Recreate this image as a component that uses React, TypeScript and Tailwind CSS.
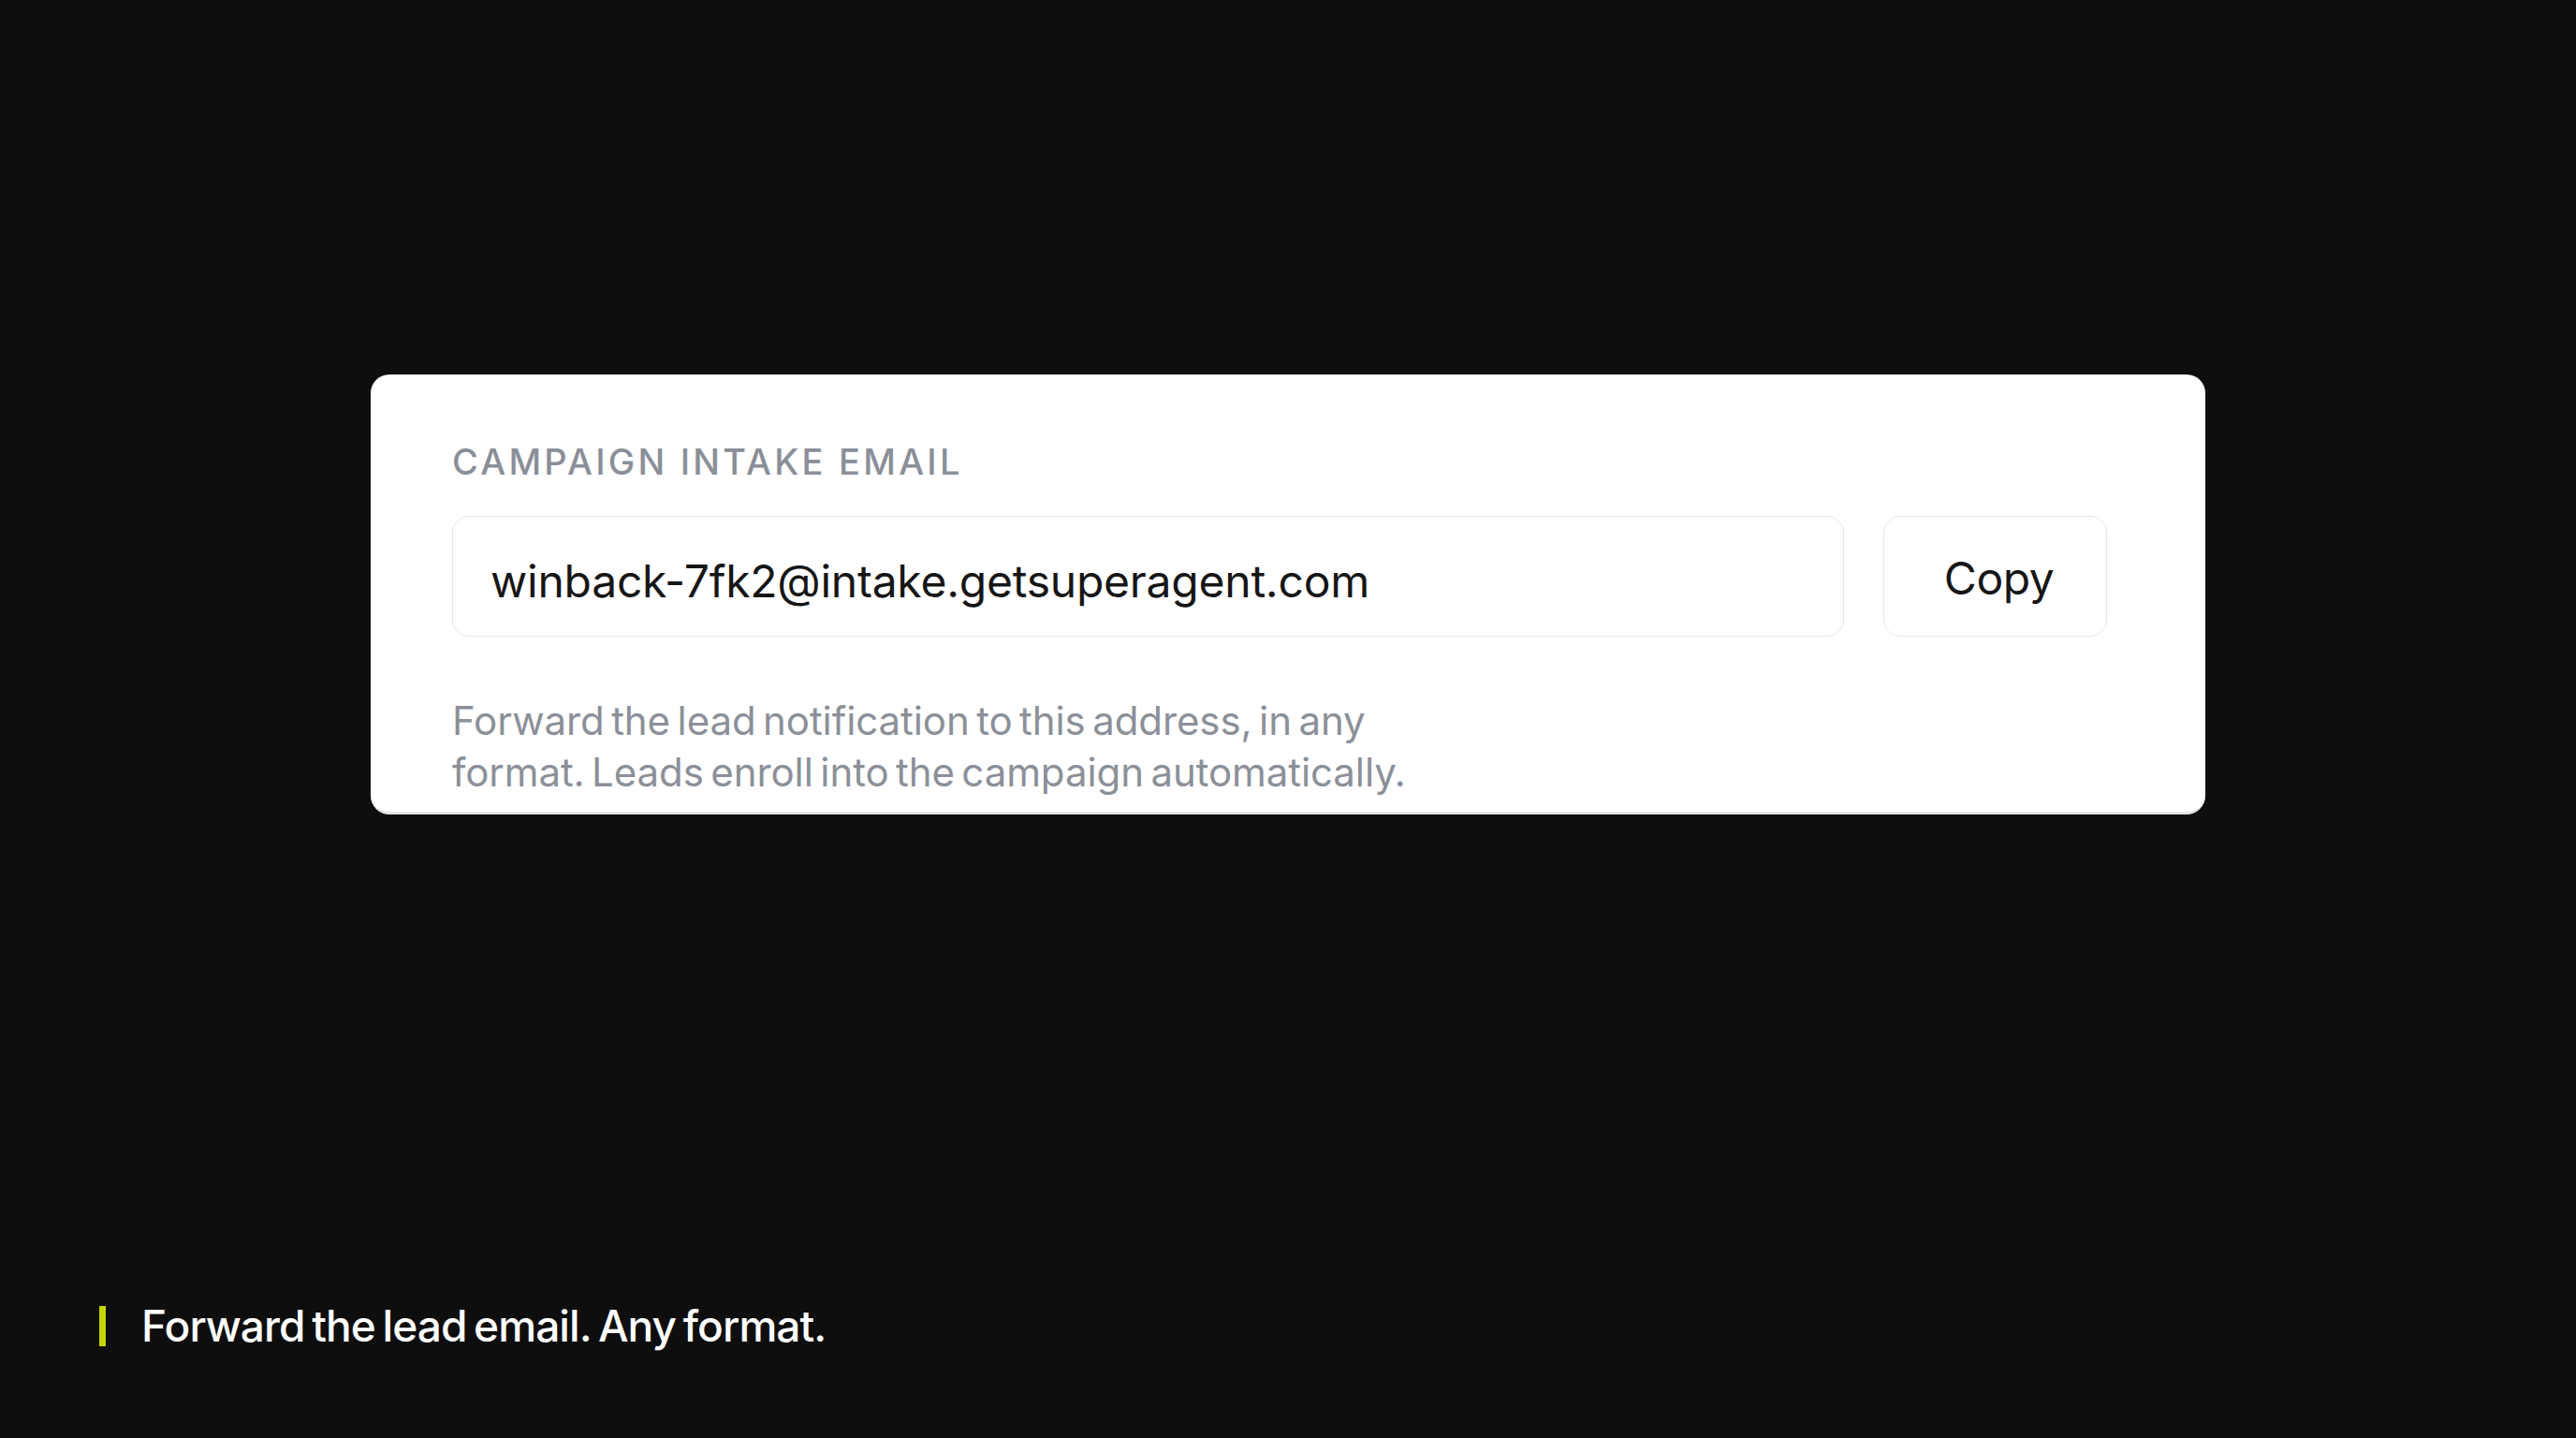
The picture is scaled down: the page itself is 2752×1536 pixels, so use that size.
import React from 'react';

const font = "font-['Inter','Noto_Sans',sans-serif]";

const IntakeCard: React.FC = () => {
  return (
    <div className="w-[1960px] h-[470px] bg-white rounded-[20px] border-b-[3px] border-[#e4e5ea] pl-[87px] pr-[105px] pt-[74px] overflow-hidden">
      <div className="text-[38px] leading-none font-medium tracking-[0.085em] text-[#8a8f98]">
        CAMPAIGN INTAKE EMAIL
      </div>

      <div className="flex gap-[42px] mt-[39px]">
        <div className="flex-1 h-[129px] border-[1.5px] border-[#e5e6eb] rounded-[18px] pl-[40px] pt-[45px]">
          <span className="text-[48px] leading-none text-[#161616] tracking-[-0.005em]">
            winback-7fk2@intake.getsuperagent.com
          </span>
        </div>
        <button className="w-[239px] h-[129px] border-[1.5px] border-[#e5e6eb] rounded-[18px] pt-[5px] pl-[8px] text-[48px] leading-none text-[#161616] tracking-[-0.01em]">
          Copy
        </button>
      </div>

      <p className="mt-[62px] w-[1100px] text-[42px] leading-[55px] text-[#8b9098] tracking-[-0.002em] [word-spacing:-0.1em]">
        Forward the lead notification to this address, in any
        <br />
        format. Leads enroll into the campaign automatically.
      </p>
    </div>
  );
};

export default function App() {
  return (
    <div className={`${font} w-full h-[1536px] bg-[#0e0e0e] flex flex-col pt-[400px] pb-[97px] overflow-hidden`}>
      <div className="pl-[396px]">
        <IntakeCard />
      </div>

      {/* caption */}
      <div className="mt-auto flex items-center gap-[38px] pl-[106px]">
        <div className="w-[7px] h-[43px] bg-[#c6d600]" />
        <span className="text-[46px] leading-none font-medium text-white tracking-[-0.02em] [word-spacing:-0.08em]">
          Forward the lead email. Any format.
        </span>
      </div>
    </div>
  );
}
